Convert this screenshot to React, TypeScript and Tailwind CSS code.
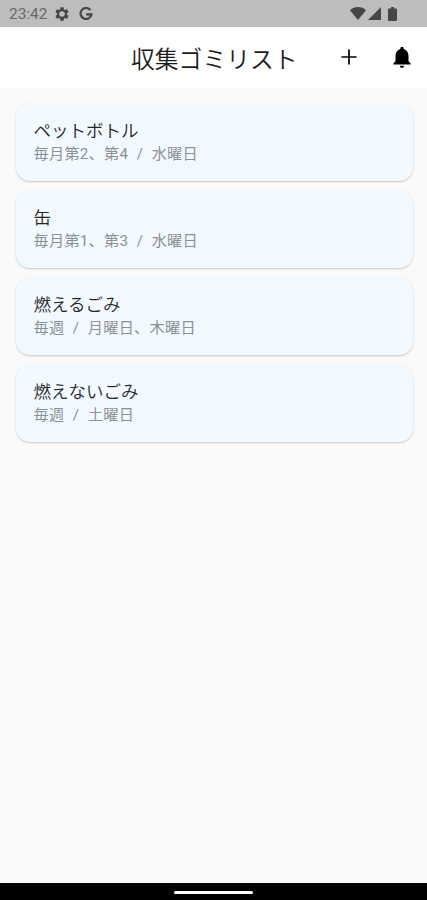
const items = [
  { id: 1, name: "ペットボトル", schedule: "毎月第2、第4", days: "水曜日" },
  { id: 2, name: "缶", schedule: "毎月第1、第3", days: "水曜日" },
  { id: 3, name: "燃えるごみ", schedule: "毎週", days: "月曜日、木曜日" },
  { id: 4, name: "燃えないごみ", schedule: "毎週", days: "土曜日" },
];

function StatusBar() {
  return (
    <div className="flex h-[27px] shrink-0 items-center bg-[#bdbdbd] pl-[9px] pr-[27px] text-[#464646]">
      <span className="w-[45px] pt-[2px] text-[15.4px] leading-none text-[#686868]">23:42</span>
      <svg className="h-4 w-4" viewBox="0 0 24 24" fill="currentColor">
        <path
          fillRule="evenodd"
          d="M19.43 12.98c.04-.32.07-.64.07-.98s-.03-.66-.07-.98l2.11-1.65a.5.5 0 0 0 .12-.64l-2-3.46a.5.5 0 0 0-.61-.22l-2.49 1a7.3 7.3 0 0 0-1.69-.98l-.38-2.65A.49.49 0 0 0 14 2h-4a.49.49 0 0 0-.49.42l-.38 2.65c-.61.25-1.17.59-1.69.98l-2.49-1a.49.49 0 0 0-.61.22l-2 3.46a.49.49 0 0 0 .12.64l2.11 1.65a7.9 7.9 0 0 0 0 1.96l-2.11 1.65a.5.5 0 0 0-.12.64l2 3.46c.12.22.39.3.61.22l2.49-1c.52.4 1.08.73 1.69.98l.38 2.65c.03.24.24.42.49.42h4c.25 0 .46-.18.49-.42l.38-2.65a7.3 7.3 0 0 0 1.69-.98l2.49 1c.23.09.49 0 .61-.22l2-3.46a.5.5 0 0 0-.12-.64zM12 16.2a4.2 4.2 0 1 1 0-8.4 4.2 4.2 0 0 1 0 8.4z"
        />
      </svg>
      <svg className="ml-[9px] h-[14px] w-[14px]" viewBox="0 0 14 14" fill="none" stroke="currentColor" strokeWidth="2.2">
        <path d="M11.4 3.1A5.5 5.5 0 1 0 12.5 7.3H7.2" />
      </svg>
      <svg className="ml-auto h-[13px] w-4" viewBox="0 0 16 13" fill="currentColor">
        <path d="M8 13 0 3.2C2.2 1.1 5 0 8 0s5.8 1.1 8 3.2z" />
      </svg>
      <svg className="ml-[2px] h-[13px] w-[13px]" viewBox="0 0 13 13" fill="currentColor">
        <path d="M0 13 13 0v13z" />
      </svg>
      <svg className="ml-[7px] mr-[3px] h-[14px] w-[9px]" viewBox="0 0 9 14" fill="currentColor">
        <path d="M3 0h3v1.5h2a1 1 0 0 1 1 1V13a1 1 0 0 1-1 1H1a1 1 0 0 1-1-1V2.5a1 1 0 0 1 1-1h2z" />
      </svg>
    </div>
  );
}

export default function App() {
  return (
    <div className="flex h-[900px] w-[427px] flex-col bg-[#fafafa] font-[Roboto,'Noto_Sans_CJK_JP',sans-serif]">
      <StatusBar />

      <header className="flex h-[61px] shrink-0 items-center justify-end bg-white pr-[12.5px] text-black">
        <h1 className="w-[169px] whitespace-nowrap pt-[5px] text-[23.8px] font-[350] leading-8 text-[#1c1c1c]">
          収集ゴミリスト
        </h1>
        <button className="ml-[36px] pb-px" aria-label="追加">
          <svg className="h-[26px] w-[26px]" viewBox="0 0 24 24" fill="currentColor">
            <path d="M19 12.8h-6.2V19h-1.6v-6.2H5v-1.6h6.2V5h1.6v6.2H19z" />
          </svg>
        </button>
        <button className="ml-[26.5px] pb-[2px]" aria-label="通知">
          <svg className="h-[26px] w-[26px]" viewBox="0 0 24 24" fill="currentColor">
            <path d="M12 22c1.1 0 2-.9 2-2h-4a2 2 0 0 0 2 2zm6-6v-5c0-3.07-1.64-5.64-4.5-6.32V4a1.5 1.5 0 0 0-3 0v.68C7.63 5.36 6 7.92 6 11v5l-2 2v1h16v-1z" />
          </svg>
        </button>
      </header>

      <main className="flex grow flex-col gap-[9px] pl-[15.5px] pr-[14.5px] pt-[15px]">
        {items.map((item) => (
          <div
            key={item.id}
            className="h-[78px] rounded-[14px] bg-[#f2f9ff] pl-[18px] pt-[16px] shadow-[0_1px_2px_rgba(0,0,0,0.2)]"
          >
            <h2 className="text-[17.5px] font-[350] leading-6 text-[#252729]">{item.name}</h2>
            <p className="whitespace-pre text-[15.2px] leading-[23px] tracking-[0.25px] [word-spacing:0.2px] text-[#8c9196]">
              {item.schedule}  /  {item.days}
            </p>
          </div>
        ))}
      </main>

      <footer className="flex h-[17px] shrink-0 items-center justify-center bg-black pt-px">
        <div className="h-[3px] w-[79px] rounded-full bg-white" />
      </footer>
    </div>
  );
}
